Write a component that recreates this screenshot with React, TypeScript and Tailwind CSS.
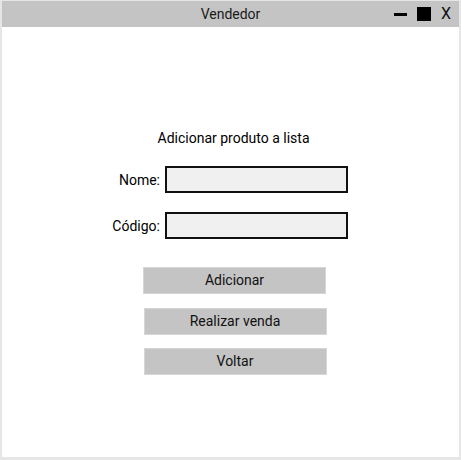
export default function App() {
    return (
        <div className="h-[460px] w-[461px] bg-[#e6e6e6] px-[2px] pb-[3px] pt-[1px] font-['Roboto',sans-serif] text-black">
            <div className="flex h-full flex-col bg-white">
                <TitleBar />
                <main className="flex flex-1 flex-col items-center pt-[102px]">
                    <p className="ml-[6px] text-[14px] leading-[18px]">Adicionar produto a lista</p>

                    <div className="-ml-[9px] mt-[19px] flex flex-col gap-[19px]">
                        <Field label="Nome:" />
                        <Field label="Código:" />
                    </div>

                    <div className="ml-[9px] mt-[28px] flex flex-col items-center gap-[14px]">
                        <Button className="-ml-[1px]">Adicionar</Button>
                        <Button>Realizar venda</Button>
                        <Button className="-mt-[1px]">Voltar</Button>
                    </div>
                </main>
            </div>
        </div>
    );
}

function TitleBar() {
    return (
        <div className="relative flex h-[26px] shrink-0 items-center justify-center bg-[#c4c4c4]">
            <span className="text-[14px] leading-none text-[#1a1a1a]">Vendedor</span>
            <div className="absolute right-[8px] top-0 flex h-full items-center gap-[10px]">
                <span className="block h-[3px] w-[13px] bg-black" />
                <span className="block h-[14px] w-[14px] bg-black" />
                <span className="text-[16px] leading-none text-[#111]">X</span>
            </div>
        </div>
    );
}

function Field({ label }: { label: string }) {
    return (
        <div className="flex items-center">
            <label className="w-[61px] pr-[5px] text-right text-[14px] leading-none">{label}</label>
            <div className="h-[27px] w-[183px] border-2 border-[#111] bg-[#f0f0f0]" />
        </div>
    );
}

function Button({ children, className = "" }: { children: string; className?: string }) {
    return (
        <div
            className={`flex h-[27px] w-[183px] items-center justify-center border border-[#d6d6d6] bg-[#c4c4c4] text-[14px] text-[#111] ${className}`}
        >
            {children}
        </div>
    );
}
